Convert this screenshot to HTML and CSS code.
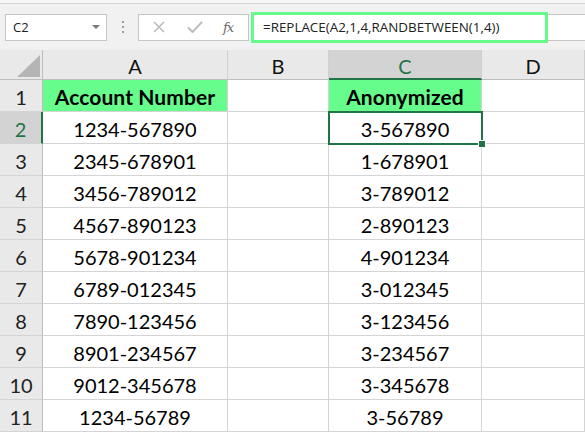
FILE: index.html
```html
<!DOCTYPE html>
<html>
<head>
<meta charset="utf-8">
<link rel="stylesheet" href="styles.css">
</head>
<body>
<div class="topline"></div>
<div class="toolbar">
  <div class="namebox"><span class="ref">C2</span><span class="caret"></span></div>
  <div class="grip"><i></i><i></i><i></i></div>
  <div class="iconbox">
    <svg class="ic" width="12" height="12" viewBox="0 0 12 12"><path d="M1 1L11 11M11 1L1 11" stroke="#bdbdbd" stroke-width="1.6" fill="none"/></svg>
    <svg class="ic" width="16" height="12" viewBox="0 0 16 12"><path d="M1 6.5L5.5 11L15 1" stroke="#bdbdbd" stroke-width="2" fill="none"/></svg>
    <span class="fx">fx</span>
  </div>
  <div class="formula"><div class="formula-hl">=REPLACE(A2,1,4,RANDBETWEEN(1,4))</div></div>
</div>
<div class="sheet">
  <div class="corner"><span class="tri"></span></div>
  <div class="colh">A</div>
  <div class="colh">B</div>
  <div class="colh sel">C</div>
  <div class="colh">D</div>

  <div class="rowh">1</div><div class="cell hd">Account Number</div><div class="cell"></div><div class="cell hd">Anonymized</div><div class="cell"></div>
  <div class="rowh sel">2</div><div class="cell">1234-567890</div><div class="cell"></div><div class="cell active">3-567890</div><div class="cell"></div>
  <div class="rowh">3</div><div class="cell">2345-678901</div><div class="cell"></div><div class="cell">1-678901</div><div class="cell"></div>
  <div class="rowh">4</div><div class="cell">3456-789012</div><div class="cell"></div><div class="cell">3-789012</div><div class="cell"></div>
  <div class="rowh">5</div><div class="cell">4567-890123</div><div class="cell"></div><div class="cell">2-890123</div><div class="cell"></div>
  <div class="rowh">6</div><div class="cell">5678-901234</div><div class="cell"></div><div class="cell">4-901234</div><div class="cell"></div>
  <div class="rowh">7</div><div class="cell">6789-012345</div><div class="cell"></div><div class="cell">3-012345</div><div class="cell"></div>
  <div class="rowh">8</div><div class="cell">7890-123456</div><div class="cell"></div><div class="cell">3-123456</div><div class="cell"></div>
  <div class="rowh">9</div><div class="cell">8901-234567</div><div class="cell"></div><div class="cell">3-234567</div><div class="cell"></div>
  <div class="rowh">10</div><div class="cell">9012-345678</div><div class="cell"></div><div class="cell">3-345678</div><div class="cell"></div>
  <div class="rowh">11</div><div class="cell">1234-56789</div><div class="cell"></div><div class="cell">3-56789</div><div class="cell"></div>
</div>
</body>
</html>
```
FILE: styles.css
```css
* { box-sizing: border-box; }
html, body { margin: 0; padding: 0; background: #fff; overflow: hidden; }
body { width: 585px; height: 435px; font-family: Lato, "Open Sans", sans-serif; }

.topline { height: 4px; background: #f7f7f7; border-bottom: 1px solid #d6d6d6; }

.toolbar {
  height: 46px;
  background: #f1f1f1;
  display: flex;
  align-items: center;
  padding: 0 0 0 5px;
}
.namebox {
  width: 102px; height: 27px;
  background: #fff; border: 1px solid #c6c6c6;
  display: flex; align-items: center; justify-content: space-between;
  padding: 0 6px 0 7px;
}
.ref { font-family: "Open Sans", sans-serif; font-size: 13px; color: #222; }
.caret { width: 0; height: 0; border-left: 4px solid transparent; border-right: 4px solid transparent; border-top: 4px solid #7a7a7a; }
.grip { width: 31px; display: flex; flex-direction: column; align-items: center; gap: 3px; }
.grip i { width: 2px; height: 2px; background: #a0a0a0; display: block; }
.iconbox {
  width: 111px; height: 27px; background: #fff; border: 1px solid #c6c6c6;
  display: flex; align-items: center; padding-left: 14px;
}
.iconbox .ic:first-child { margin-right: 22px; }
.iconbox .ic:nth-child(2) { margin-right: 20px; }
.fx { font-family: "DejaVu Serif", serif; font-style: italic; font-size: 13px; color: #6a6a6a; letter-spacing: -1px; }
.formula {
  flex: 1; height: 27px; margin-left: 2px; background: #fff;
  border: 1px solid #c6c6c6; border-right: none;
  display: flex; align-items: center;
}
.formula-hl {
  width: 297px; height: 31px; margin-left: -1px;
  border: 3px solid #66fa8b; background: #fff;
  font-family: "Open Sans", sans-serif; font-size: 13.4px; color: #222;
  padding-left: 9px; line-height: 25px; letter-spacing: 0;
}

.sheet {
  display: grid;
  grid-template-columns: 43px 185px 101px 153px 1fr;
  grid-template-rows: 30px repeat(11, 32px);
  font-size: 20px;
  color: #000;
}
.corner { background: #e9e9e9; border-right: 1px solid #bdbdbd; border-bottom: 1px solid #bdbdbd; position: relative; }
.tri {
  position: absolute; right: 2px; bottom: 2px; width: 0; height: 0;
  border-left: 23px solid transparent; border-bottom: 22px solid #b5b5b5;
}
.colh {
  background: #e9e9e9; border-right: 1px solid #d0d0d0; border-bottom: 1px solid #bdbdbd;
  display: flex; align-items: flex-end; justify-content: center; padding-bottom: 1px;
  color: #111; line-height: 24px;
}
.colh.sel { background: #d3d3d3; color: #217346; border-bottom: 2px solid #217346; padding-bottom: 0; }
.rowh {
  background: #e9e9e9; border-right: 1px solid #bdbdbd; border-bottom: 1px solid #d4d4d4;
  display: flex; align-items: flex-end; justify-content: center; padding-bottom: 1px;
  color: #222; line-height: 26px;
}
.rowh.sel { background: #d3d3d3; color: #217346; border-right: 2px solid #217346; }
.cell {
  border-right: 1px solid #d4d4d4; border-bottom: 1px solid #d4d4d4;
  display: flex; align-items: flex-end; justify-content: center; padding-bottom: 1px;
  line-height: 26px; white-space: nowrap;
}
.cell.hd { background: #66fd8c; font-weight: 700; font-size: 21px; letter-spacing: 0.1px; }
.cell.active { position: relative; outline: 2px solid #217346; outline-offset: -1px; }
.cell.active::after {
  content: ""; position: absolute; right: -4px; bottom: -4px; width: 6px; height: 6px;
  background: #217346; border: 1px solid #fff; box-sizing: content-box; margin: -1px;
}
```
